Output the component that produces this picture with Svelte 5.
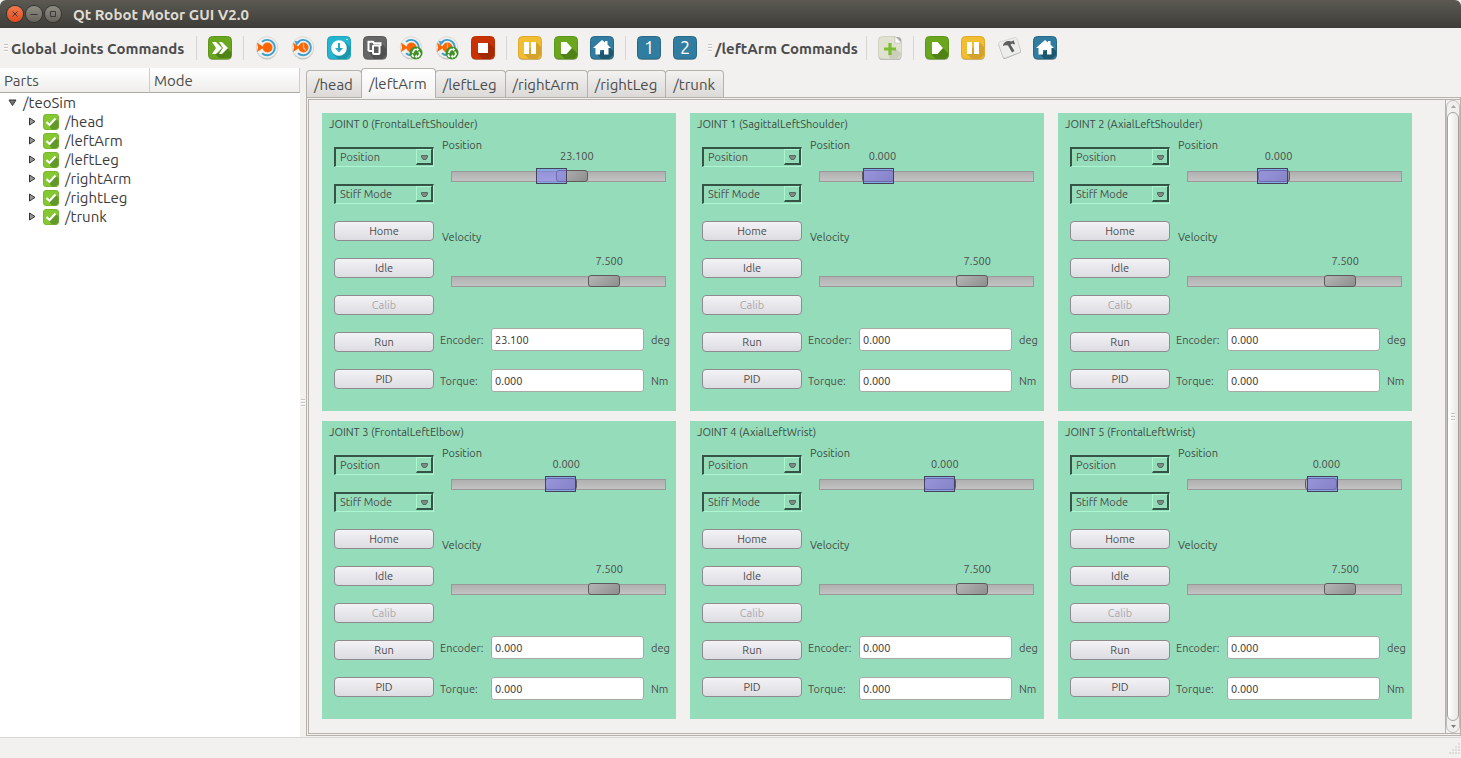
<script>
  const parts = ['/head', '/leftArm', '/leftLeg', '/rightArm', '/rightLeg', '/trunk'];
  let active = $state('/leftArm');

  // target and marker are positions along the slider travel, in percent
  const joints = [
    { name: 'FrontalLeftShoulder', target: 57.3, marker: 46.6, value: '23.100' },
    { name: 'SagittalLeftShoulder', target: 23.2, marker: 24.2, value: '0.000' },
    { name: 'AxialLeftShoulder', target: 38.6, marker: 38.5, value: '0.000' },
    { name: 'FrontalLeftElbow', target: 51.5, marker: 51.4, value: '0.000' },
    { name: 'AxialLeftWrist', target: 57.3, marker: 57.2, value: '0.000' },
    { name: 'FrontalLeftWrist', target: 64.7, marker: 65.5, value: '0.000' }
  ];

  const globalTools = [
    ['runAll'], ['cycle', 'cycleTime', 'download', 'copy', 'cycleLoop', 'cycleTimeLoop', 'stop'],
    ['pause', 'play', 'home'], ['one', 'two']
  ];
  const partTools = [['add'], ['play', 'pause', 'calibrate', 'home']];
  const labels = {
    runAll: 'Run all', cycle: 'Cycle', cycleTime: 'Cycle by time', download: 'Load', copy: 'Copy',
    cycleLoop: 'Repeat cycle', cycleTimeLoop: 'Repeat cycle by time', stop: 'Stop', pause: 'Pause',
    play: 'Play', home: 'Home', one: 'Position 1', two: 'Position 2', add: 'Add', calibrate: 'Calibrate'
  };
</script>

{#snippet tile(fill, edge)}
  <rect x="0.5" y="1" width="23" height="23" rx="4" fill="#8b8b86" opacity=".55" />
  <rect x="0.5" y="0.5" width="23" height="22.5" rx="4" fill={fill} stroke={edge} />
{/snippet}

{#snippet icon(name)}
  <svg viewBox="0 0 24 24" width="24" height="24" aria-hidden="true">
    {#if name === 'runAll'}
      {@render tile('#6aa61e', '#5c951b')}
      <path d="M6 17h6l7-5 4 4v6H11z" fill="#4f8315" />
      <path d="M4 6h4l6 6-6 6H4l4-6zM11 6h3l6 6-6 6h-3l4-6z" fill="#fff" />
    {:else if name.startsWith('cycle')}
      <circle cx="12" cy="12.8" r="10.6" fill="#b9b9b7" />
      <circle cx="12" cy="11.5" r="10.8" fill="#f0f0ee" stroke="#d3d3d0" stroke-width=".8" />
      <path d="M7 5.900a7.700 7.700 0 1 1 0 11.400" fill="none" stroke="#3e9fcf" stroke-width="1.900" />
      <path d="M2 6.500L9 11.500 2 16l1-4.500z" fill="#ff6600" />
      <circle cx="12.500" cy="11.500" r="5" fill="#ff6600" />
      {#if name.startsWith('cycleTime')}
        <path d="M3.500 5l6 .5-4 4z" fill="#3e9fcf" />
        <path d="M12.500 7.500v4.200l2.500 3" fill="none" stroke="#c9c1a9" stroke-width="1.300" />
      {/if}
      {#if name.endsWith('Loop')}
        <circle cx="17" cy="17" r="6.500" fill="#3f8f28" />
        <path d="M13.500 17l2-3.500h3m1.300 2l1.200 2.500-1.500 2.500h-2m-2.500 0h-1l-1-2" fill="none" stroke="#f4f9f2" stroke-width="1.700" />
        <path d="M18 11.500l2.200 2-2.200 2zM17.800 18.200v4.500l-2.200-2.200z" fill="#f4f9f2" />
      {/if}
    {:else if name === 'download'}
      {@render tile('#24b6d0', '#1fa3ba')}
      <path d="M18 6l5 5v7l-4 5h-8l-5-5z" fill="#1b95ab" />
      <circle cx="12" cy="12" r="7.800" fill="#fff" />
      <path d="M11 7h2v5h3l-4 4.500L8 12h3z" fill="#24a9c4" />
      <circle cx="20" cy="3.500" r=".7" fill="#fff" />
    {:else if name === 'copy'}
      {@render tile('#666', '#5b5b5b')}
      <path d="M18 7l5 5v7l-4 4h-8l-5-7z" fill="#505050" />
      <path d="M4.500 5.500h5l1 1.500h7.500v4H11v5H5.500z" fill="#666" />
      <path d="M5.500 15V5.800h4.500l1 1.400h6.500V10M5.500 15H9" fill="none" stroke="#fff" stroke-width="2" />
      <rect x="10" y="9.500" width="6.500" height="8.500" rx="1" fill="#5c5c5c" stroke="#fff" stroke-width="2" />
    {:else if name === 'stop'}
      {@render tile('#c93303', '#bb3106')}
      <path d="M17 6l6 6v7l-4 4h-7l-6-6z" fill="#a22a05" />
      <rect x="7" y="7" width="10" height="10" fill="#fff" />
    {:else if name === 'pause'}
      {@render tile('#f3bd31', '#dcaa2c')}
      <path d="M18 6l5 5v8l-4 4h-8l-5-5z" fill="#d5a32b" />
      <path d="M6 6h5v12H6zM13 6h5v12h-5z" fill="#fff" />
    {:else if name === 'play'}
      {@render tile('#6aa61e', '#5c951b')}
      <path d="M17 11l6 6v3l-3 3h-9l-5-5z" fill="#4f8315" />
      <path d="M7 6h5.500l5 5.500v1l-5 5.500H7z" fill="#fff" />
    {:else if name === 'home'}
      {@render tile('#317da2', '#286985')}
      <path d="M19 11l4 4v4l-4 4h-8l-4-5z" fill="#1c566f" />
      <path d="M12 4l3 2.500V5h2.500v3.500L21 12h-2.500v6.500H14V14h-4v4.500H5.500V12H3z" fill="#fff" />
    {:else if name === 'one' || name === 'two'}
      {@render tile('#317da2', '#286985')}
      <text x="12" y="18" text-anchor="middle" class="digit">{name === 'one' ? '1' : '2'}</text>
    {:else if name === 'add'}
      <rect x=".5" y="1" width="23" height="23" rx="4" fill="#aaa" />
      <path d="M4.500.5H17L23.500 7v12a4 4 0 0 1-4 4h-15a4 4 0 0 1-4-4V4.500a4 4 0 0 1 4-4z" fill="#e0e2cf" stroke="#cfd1c1" />
      <path d="M18 13l5 4v2l-4 4h-7l-2-5z" fill="#cbcebb" />
      <path d="M17 .5L23.500 7H17z" fill="#fff" stroke="#bbb" stroke-width=".6" />
      <path d="M12 7v12M6 13h12" stroke="#7bbd34" stroke-width="3.200" />
    {:else}
      <path d="M3 7l15-5a2 2 0 0 1 2 1l4 12a2 2 0 0 1-1 2L8 23a2 2 0 0 1-2-1L1.500 9A2 2 0 0 1 3 7z" fill="#aaa" />
      <path d="M3 6l15-4.500a2 2 0 0 1 2 1l3.500 12a2 2 0 0 1-1 2L8 22a2 2 0 0 1-2-1L1.500 8A2 2 0 0 1 3 6z" fill="#ededec" stroke="#c8c8c8" stroke-width=".6" />
      <path d="M6 10c0-3 3-5 6-5l3 .5 1.500-1.500 1.500 4-1 .5-1.500-1-2 1 4 6.500-2.500 1.500L11 9.500C9 9 7.500 9 6 10z" fill="#5e5e5e" />
    {/if}
  </svg>
{/snippet}

{#snippet tools(groups)}
  {#each groups as group}
    <div class="group">
      {#each group as name}
        <button class="tool" aria-label={labels[name]}>{@render icon(name)}</button>
      {/each}
    </div>
  {/each}
{/snippet}

{#snippet combo(label, value)}
  <span class="combo">
    <select aria-label={label}><option>{value}</option></select>
    <b><svg width="7" height="5" viewBox="0 0 7 5"><path d="M.5.500h6v1.500L5 4.500H2L.5 2z" fill="#7b8c83" stroke="#586a61" /></svg></b>
  </span>
{/snippet}

<div class="window">
  <header class="titlebar">
    <button class="wm close" aria-label="Close"><svg viewBox="0 0 16 16" width="16" height="16"><path d="M5.500 5.500l5 5m0-5l-5 5" /></svg></button>
    <button class="wm" aria-label="Minimize"><svg viewBox="0 0 16 16" width="16" height="16"><path d="M4.500 8.500h7" /></svg></button>
    <button class="wm" aria-label="Maximize"><svg viewBox="0 0 16 16" width="16" height="16"><path d="M5.500 5.500h5v5h-5z" /></svg></button>
    <h1>Qt Robot Motor GUI V2.0</h1>
  </header>

  <div class="toolbar">
    <i class="grip"></i>
    <strong class="global">Global Joints Commands</strong>
    {@render tools(globalTools)}
    <i class="grip"></i>
    <strong class="part">/leftArm Commands</strong>
    {@render tools(partTools)}
  </div>

  <main>
    <aside>
      <table>
        <thead><tr><th>Parts</th><th>Mode</th></tr></thead>
        <tbody>
          <tr>
            <td><span class="node root"><svg width="9" height="8" viewBox="0 0 9 8"><path d="M1 1h7L4.500 6.500z" fill="#777" stroke="#333" /></svg>/teoSim</span></td><td></td>
          </tr>
          {#each parts as part}
            <tr>
              <td>
                <span class="node">
                  <svg width="8" height="9" viewBox="0 0 8 9"><path d="M1.500 1v7L7 4.500z" fill="#999" stroke="#333" /></svg>
                  <svg class="check" width="16" height="16" viewBox="0 0 16 16">
                    <rect x=".5" y=".5" width="15" height="15" rx="2.500" fill="#85c832" stroke="#79b733" />
                    <path d="M13 5l2.500 2.500V13L13 15.500H9L4 10z" fill="#62982a" />
                    <path d="M3.500 8l3 3 6-6.500" fill="none" stroke="#fff" stroke-width="2.200" />
                  </svg>
                  {part}
                </span>
              </td><td></td>
            </tr>
          {/each}
        </tbody>
      </table>
    </aside>
    <div class="splitter"><i class="grip"></i></div>

    <section class="pane">
      <div class="tabs" role="tablist">
        {#each parts as part}
          <button role="tab" aria-selected={active === part} class:active={active === part} onclick={() => (active = part)}>{part}</button>
        {/each}
      </div>
      <div class="frame">
        <div class="area">
          <div class="cards">
            {#each joints as joint, i}
              <article>
                <h2>JOINT {i} ({joint.name})</h2>
                <div class="body">
                  <div class="actions">
                    {@render combo('Control mode', 'Position')}
                    {@render combo('Interaction mode', 'Stiff Mode')}
                    <button>Home</button>
                    <button>Idle</button>
                    <button disabled>Calib</button>
                    <button>Run</button>
                    <button>PID</button>
                  </div>
                  <div class="values">
                    <label class="caption" for="pos{i}">Position</label>
                    <div class="slider" style="--at: {joint.target / 100}; --mark: {joint.marker / 100}">
                      <output for="pos{i}">{joint.value}</output>
                      <input id="pos{i}" type="range" min="0" max="100" step="any" value={joint.target} />
                      <i class="marker"></i>
                    </div>
                    <label class="caption velocity" for="vel{i}">Velocity</label>
                    <div class="slider" style="--at: 0.75">
                      <output for="vel{i}">7.500</output>
                      <input id="vel{i}" type="range" min="0" max="10" step="any" value="7.5" />
                    </div>
                    <div class="readings">
                      <label for="enc{i}">Encoder:</label><input id="enc{i}" value={joint.value} readonly /><span>deg</span>
                      <label for="tor{i}">Torque:</label><input id="tor{i}" value="0.000" readonly /><span>Nm</span>
                    </div>
                  </div>
                </div>
              </article>
            {/each}
          </div>
          <div class="scroll">
            <svg width="11" height="11" viewBox="0 0 11 11"><path d="M3 7h5L5.500 4z" fill="#a5a5a3" /></svg>
            <div class="thumb"><i class="grip"></i></div>
            <svg width="11" height="11" viewBox="0 0 11 11"><path d="M3 4h5L5.500 7z" fill="#7d7d7b" /></svg>
          </div>
        </div>
      </div>
    </section>
  </main>

  <footer>
    <svg width="12" height="12" viewBox="0 0 12 12" fill="#dcdbd9"><path d="M10 0h2v2h-2zM7 3h2v2H7zM10 3h2v2h-2zM4 6h2v2H4zM7 6h2v2H7zM10 6h2v2h-2zM1 9h2v2H1zM4 9h2v2H4zM7 9h2v2H7zM10 9h2v2h-2z" /></svg>
  </footer>
</div>

<style>
  :global(body) { margin: 0; }
  .window {
    display: flex; flex-direction: column; min-height: 100vh; min-width: 1200px;
    background: #f2f1f0; color: #4c4c4c;
    font: 15px/19px Ubuntu, "Open Sans", sans-serif;
  }
  .window * { box-sizing: border-box; }
  button, input, select { font: inherit; color: inherit; margin: 0; }
  .titlebar {
    display: flex; align-items: center; gap: 3px; height: 28px; padding-left: 7px;
    background: linear-gradient(#5b5952, #3e3d39); border-radius: 6px 6px 0 0;
  }
  .wm {
    width: 16px; height: 16px; padding: 0; border: 0; border-radius: 50%;
    background: linear-gradient(#8f8d84, #65635b); box-shadow: 0 0 0 1px #35342f;
  }
  .wm svg { display: block; fill: none; stroke: #3a3935; }
  .close { background: linear-gradient(#f4794e, #df4b1c); }
  h1 { margin: 0 0 0 9px; font-size: 15px; color: #dfdbd2; }
  .toolbar { display: flex; align-items: center; height: 40px; padding-left: 4px; }
  .grip { width: 4px; height: 8px; background: repeating-linear-gradient(#c4c3c1 0 1px, #fff 1px 2px, #f2f1f0 2px 3px); }
  .toolbar strong { white-space: nowrap; padding-left: 3px; }
  .global { width: 188px; }
  .part { width: 154px; }
  .group { display: flex; gap: 12px; padding: 0 11px; border-left: 1px solid #d6d5d3; }
  .tool { padding: 0; border: 0; background: none; width: 24px; height: 24px; }
  .tool svg { display: block; }
  .digit { font: 18px Ubuntu, "Open Sans", sans-serif; fill: #fff; }
  main { display: flex; flex: 1; min-height: 669px; }
  aside { width: 300px; background: #fff; }
  table { width: 100%; border-spacing: 0; table-layout: fixed; }
  th {
    height: 25px; padding: 0 4px; text-align: left; font-weight: 400;
    background: linear-gradient(#fff, #efeeec); border-bottom: 1px solid #aeaba7; border-right: 1px solid #cfcdca;
  }
  td { height: 19px; padding: 0; color: #3c3c3c; }
  .node { display: flex; align-items: center; gap: 7px; height: 19px; padding-left: 28px; }
  .node.root { padding-left: 8px; gap: 6px; }
  .check { margin-right: -1px; }
  .splitter { width: 6px; display: flex; align-items: center; justify-content: center; }
  .pane { flex: 1; display: flex; flex-direction: column; min-width: 0; }
  .tabs { display: flex; align-items: flex-end; height: 30px; }
  .tabs button {
    height: 27px; padding: 0 8px 0 7px; margin-right: -1px; margin-bottom: 1px; border: 1px solid #b5b2ae; border-bottom: 0;
    border-radius: 4px 4px 0 0; background: linear-gradient(#f3f2f1, #dcdad7);
  }
  .tabs button.active { position: relative; height: 30px; margin-bottom: 0; background: linear-gradient(#fff, #f2f1f0); z-index: 1; }
  .frame { flex: 1; display: flex; margin-top: -1px; padding: 1px 0 1px 1px; border: 1px solid #b5b2ae; margin-bottom: 1px; }
  .area { flex: 1; display: flex; border: 1px solid #b5b2ae; border-right: 0; }
  .cards {
    flex: 1; display: grid; grid-template-columns: repeat(3, 1fr); align-content: start;
    gap: 10px 14px; padding: 13px 33px 13px 13px; border-right: 1px solid #b5b2ae;
  }
  article { height: 298px; background: #95ddba; font-size: 11px; line-height: 14px; }
  h2 { margin: 0; padding: 4px 7px 0; font-size: 11px; font-weight: 400; line-height: 14px; color: #3c4a43; }
  .body { display: flex; padding: 7px 6px 0 12px; gap: 6px; }
  .actions { width: 100px; padding-top: 9px; display: flex; flex-direction: column; gap: 17px; }
  .actions button {
    height: 20px; padding: 0; border: 1px solid #8e8a90; border-radius: 4px;
    background: linear-gradient(#f3f3f6, #dcdce2); line-height: 16px;
  }
  .actions button:disabled { color: #a9a8a9; }
  .combo {
    position: relative; display: block; height: 20px; border: solid; border-width: 2px 1px 1px 2px;
    border-color: #365445 #aaf7d0 #aaf7d0 #365445;
  }
  .combo select {
    display: block; width: 100%; height: 16px; padding: 0 4px; border: 0; border-right: 1px solid #365445;
    border-radius: 0; background: none; appearance: none;
  }
  .combo b {
    position: absolute; right: 1px; top: 0; width: 16px; height: 16px; display: grid; place-items: center; padding-top: 2px;
    border: solid; border-width: 1px 1px 2px 1px; border-color: #aaf7d0 #365445 #365445 #aaf7d0; pointer-events: none;
  }
  .values { flex: 1; min-width: 0; display: flex; flex-direction: column; }
  .caption { padding-left: 2px; color: #3c4a43; height: 11px; line-height: 14px; }
  .velocity { margin-top: 45px; height: 24px; }
  .slider { position: relative; margin: 0 4px 0 11px; height: 36px; }
  .slider output { display: block; width: 60px; text-align: center; height: 21px; margin-left: calc(var(--at) * (100% - 32px) - 9px); }
  .slider input { appearance: none; display: block; width: 100%; height: 12px; background: none; }
  .slider input::-webkit-slider-runnable-track { height: 11px; border: 1px solid #999; background: linear-gradient(#b0b0b0, #c3c3c3); box-sizing: border-box; }
  .slider input::-webkit-slider-thumb {
    appearance: none; box-sizing: border-box; width: 32px; height: 12px; margin-top: -2px;
    border: 1px solid #5c5c5c; border-radius: 3px; background: linear-gradient(135deg, #b4b4b4, #8f8f8f);
  }
  .marker {
    position: absolute; top: 19px; left: calc(var(--mark) * (100% - 32px)); width: 31px; height: 16px;
    border: 1px solid #44445c; background: rgb(124 118 255 / .5); pointer-events: none;
  }
  .readings { display: grid; grid-template-columns: 51px 1fr 26px; row-gap: 18px; align-items: center; margin-top: 38px; }
  .readings input { width: 100%; min-width: 0; height: 23px; padding: 0 3px; border: 1px solid #aaa8a4; border-radius: 3px; background: #fff; color: #333; }
  .readings span { padding-left: 7px; }
  .scroll {
    width: 14px; display: flex; flex-direction: column; align-items: center;
    border: 1px solid #c2bfbb; border-radius: 7px; background: #f0efee;
  }
  .thumb {
    flex: 1; width: 12px; display: grid; place-items: center; border: 1px solid #a6a39f; border-radius: 6px;
    background: linear-gradient(90deg, #fff, #e8e7e5);
  }
  footer { height: 21px; border-top: 1px solid #d8d6d4; display: flex; justify-content: flex-end; align-items: flex-end; padding: 0 1px 3px; }
</style>
